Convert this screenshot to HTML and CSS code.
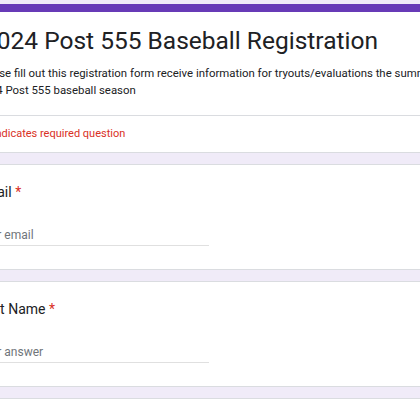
FILE: index.html
```html
<!DOCTYPE html>
<html lang="en">
<head>
    <meta charset="UTF-8">
    <meta name="viewport" content="width=device-width, initial-scale=1.0">
    <title>2024 Post 555 Baseball Registration</title>
    <link rel="stylesheet" href="styles.css">
</head>
<body>
    <div class="form">
        <div class="card header">
            <div class="title">2024 Post 555 Baseball Registration</div>
            <div class="desc">Please fill out this registration form receive information for tryouts/evaluations the summer<br>2024 Post 555 baseball season</div>
            <div class="required">* Indicates required question</div>
        </div>

        <div class="card question">
            <div class="label">Email <span class="star">*</span></div>
            <div class="input">Your email</div>
        </div>

        <div class="card question">
            <div class="label">First Name <span class="star">*</span></div>
            <div class="input">Your answer</div>
        </div>

        <div class="card question">
            <div class="label">Last Name <span class="star">*</span></div>
            <div class="input">Your answer</div>
        </div>
    </div>
</body>
</html>
```

FILE: styles.css
```css
body {
    margin: 0;
    padding-top: 4px;
    background: #f0ebf8;
    font-family: Roboto, Arial, sans-serif;
    color: #202124;
    overflow: hidden;
}
.form {
    width: 560px;
    margin-left: -48px;
    display: flex;
    flex-direction: column;
    gap: 11px;
}
.card {
    background: white;
    border: 1px solid #dadce0;
    border-radius: 8px;
    padding: 0 24px;
}
.header {
    border-top: 8px solid #673ab7;
    padding: 0;
}
.title {
    font-size: 24.5px;
    line-height: 40px;
    padding: 9px 24px 0 30px;
    white-space: nowrap;
}
.desc {
    font-size: 11.4px;
    line-height: 17px;
    padding: 4px 24px 16px;
    white-space: nowrap;
    border-bottom: 1px solid #dadce0;
}
.required {
    color: #d93025;
    font-size: 11px;
    line-height: 20px;
    padding: 8px 24px 8px 32px;
}
.question {
    padding-top: 15px;
    padding-bottom: 23px;
}
.label {
    font-size: 14px;
    line-height: 24px;
}
.star { color: #d93025; }
.input {
    width: 232px;
    margin-top: 21px;
    font-size: 12px;
    line-height: 20px;
    color: #70757a;
    border-bottom: 1px solid #e0e0e0;
}
```
